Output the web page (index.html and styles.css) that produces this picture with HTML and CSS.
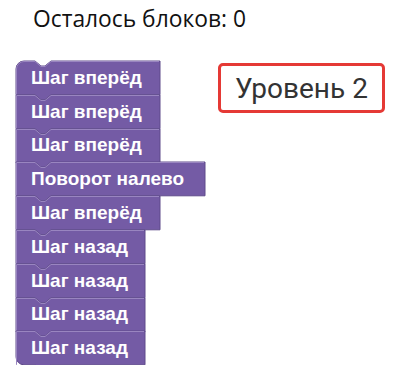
FILE: index.html
```html
<!DOCTYPE html>
<html lang="ru">
<head>
    <meta charset="UTF-8">
    <meta name="viewport" content="width=device-width, initial-scale=1.0">
    <title>Уровень 2</title>
    <link rel="stylesheet" href="styles.css">
</head>
<body>
    <div class="counter">Осталось блоков: <span id="left">0</span></div>
    <div class="workspace">
        <div class="stack" id="stack"></div>
        <div class="level">Уровень 2</div>
    </div>
    <script>
        let stack = document.getElementById('stack');
        let program = [
            ['Шаг вперёд', 144],
            ['Шаг вперёд', 144],
            ['Шаг вперёд', 144],
            ['Поворот налево', 189],
            ['Шаг вперёд', 144],
            ['Шаг назад', 129],
            ['Шаг назад', 129],
            ['Шаг назад', 129],
            ['Шаг назад', 129]
        ];
        const H = 33.8;

        function blockPath(w, first, last) {
            let d = first ? 'M0,8 A8,8 0 0 1 8,0' : 'M0,0';
            d += ' H19 l6,5 h4 l6,-5 H' + w + ' V' + H + ' H35 l-6,5 h-4 l-6,-5';
            d += last ? ' H8 A8,8 0 0 1 0,' + (H - 8) + ' Z' : ' H0 Z';
            return d;
        }

        function lightPath(w, first) {
            let d = first ? 'M0.5,' + H + ' V8 A7.5,7.5 0 0 1 8,0.5' : 'M0.5,' + H + ' V0.5';
            return d + ' H19 l6,5 h4 l6,-5 H' + (w - 1);
        }

        program.forEach((item, i) => {
            let w = item[1];
            let div = document.createElement('div');
            div.className = 'block';
            div.style.width = w + 'px';
            div.innerHTML =
                '<svg class="shape" width="' + w + '" height="' + (H + 5) + '">' +
                '<path class="fill" d="' + blockPath(w, i == 0, i == program.length - 1) + '"/>' +
                '<path class="light" d="' + lightPath(w, i == 0) + '"/>' +
                '</svg><span class="label">' + item[0] + '</span>';
            stack.appendChild(div);
        });
    </script>
</body>
</html>
```
FILE: styles.css
```css
body {
    margin: 0;
    background: #fff;
}
.counter {
    font-family: "Open Sans", sans-serif;
    font-size: 22.8px;
    color: #111;
    padding: 0 0 0 33px;
    line-height: 38px;
}
.workspace {
    display: flex;
    align-items: flex-start;
    gap: 13px;
    padding: 23px 0 0 16px;
}
.stack {
    display: flex;
    flex-direction: column;
    width: 189px;
}
.block {
    position: relative;
    height: 33.8px;
    display: flex;
    align-items: center;
    padding-left: 15px;
    box-sizing: border-box;
}
.shape {
    position: absolute;
    left: 0;
    top: 0;
    overflow: visible;
}
.shape .fill {
    fill: #745ba5;
    stroke: #5f4a8a;
    stroke-width: 1;
}
.shape .light {
    fill: none;
    stroke: #9985c0;
    stroke-width: 1;
}
.label {
    position: relative;
    font-family: "Liberation Sans", Arial, sans-serif;
    font-weight: bold;
    font-size: 19px;
    color: #fff;
}
.level {
    margin-top: 2px;
    width: 167px;
    height: 50px;
    box-sizing: border-box;
    border: 3px solid #e53935;
    border-radius: 5px;
    display: flex;
    align-items: center;
    justify-content: center;
    font-family: Roboto, sans-serif;
    font-size: 28px;
    color: #333;
}
```
